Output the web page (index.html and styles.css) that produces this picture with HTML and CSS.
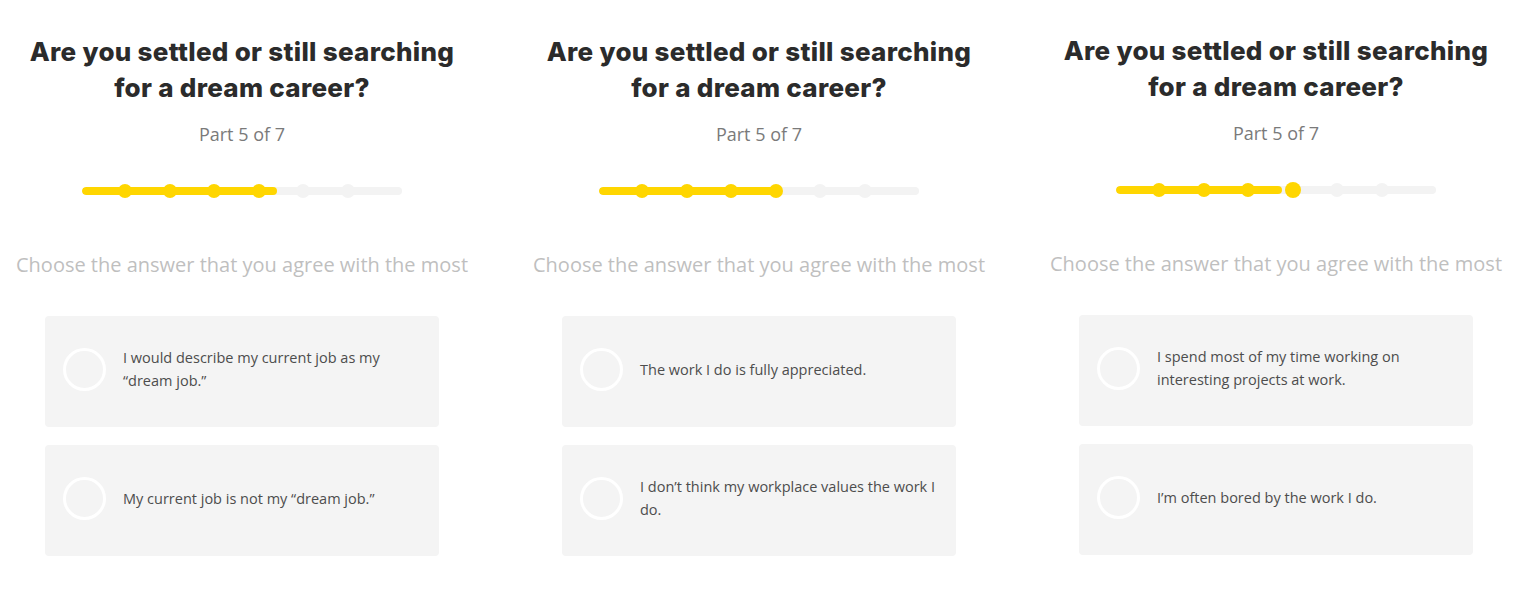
FILE: index.html
```html
<!DOCTYPE html>
<html lang="en">
<head>
<meta charset="utf-8">
<title>Quiz</title>
<link rel="stylesheet" href="styles.css">
</head>
<body>
<main class="row">
  <section class="col">
    <h1 class="title">Are you settled or still searching<br>for a dream career?</h1>
    <p class="part">Part 5 of 7</p>
    <div class="progress">
      <div class="track"><div class="fill" style="width:195px"></div></div>
      <div class="dots">
        <span class="dot on"></span><span class="dot on"></span><span class="dot on"></span><span class="dot on"></span><span class="dot"></span><span class="dot"></span>
      </div>
    </div>
    <p class="hint">Choose the answer that you agree with the most</p>
    <div class="cards">
      <div class="card"><span class="radio"></span><span class="label">I would describe my current job as my “dream job.”</span></div>
      <div class="card"><span class="radio"></span><span class="label">My current job is not my “dream job.”</span></div>
    </div>
  </section>
  <section class="col">
    <h1 class="title">Are you settled or still searching<br>for a dream career?</h1>
    <p class="part">Part 5 of 7</p>
    <div class="progress">
      <div class="track"><div class="fill" style="width:183px"></div></div>
      <div class="dots">
        <span class="dot on"></span><span class="dot on"></span><span class="dot on"></span><span class="dot on"></span><span class="dot"></span><span class="dot"></span>
      </div>
    </div>
    <p class="hint">Choose the answer that you agree with the most</p>
    <div class="cards">
      <div class="card"><span class="radio"></span><span class="label">The work I do is fully appreciated.</span></div>
      <div class="card"><span class="radio"></span><span class="label">I don’t think my workplace values the work I do.</span></div>
    </div>
  </section>
  <section class="col col-up">
    <h1 class="title">Are you settled or still searching<br>for a dream career?</h1>
    <p class="part">Part 5 of 7</p>
    <div class="progress">
      <div class="track"><div class="fill" style="width:166px"></div></div>
      <div class="dots">
        <span class="dot on"></span><span class="dot on"></span><span class="dot on"></span><span class="dot on big"></span><span class="dot"></span><span class="dot"></span>
      </div>
    </div>
    <p class="hint">Choose the answer that you agree with the most</p>
    <div class="cards">
      <div class="card"><span class="radio"></span><span class="label">I spend most of my time working on interesting projects at work.</span></div>
      <div class="card"><span class="radio"></span><span class="label">I’m often bored by the work I do.</span></div>
    </div>
  </section>
</main>
</body>
</html>
```
FILE: styles.css
```css
* { box-sizing: border-box; }
html, body { margin: 0; background: #fff; }
body { font-family: "Open Sans", Lato, sans-serif; }

.row {
  display: flex;
  gap: 35px;
  padding-left: 1px;
}

.col {
  width: 482px;
  flex: none;
  display: flex;
  flex-direction: column;
  align-items: center;
  padding-top: 34px;
}
.col-up { margin-top: -1px; }

.title {
  margin: 0;
  font-family: Inter, sans-serif;
  font-weight: 800;
  font-size: 26px;
  line-height: 36px;
  letter-spacing: 0.3px;
  color: #2b2b2b;
  text-align: center;
}

.part {
  margin: 16px 0 0;
  font-size: 18px;
  line-height: 24px;
  color: #7a7a7a;
}

.progress {
  position: relative;
  width: 320px;
  height: 16px;
  margin-top: 37px;
}
.track {
  position: absolute;
  left: 0; right: 0; top: 4px;
  height: 8px;
  border-radius: 4px;
  background: #f3f3f3;
  overflow: hidden;
}
.fill {
  height: 100%;
  background: #ffd600;
  border-radius: 4px;
}
.dots {
  position: absolute;
  inset: 0;
  display: flex;
  align-items: center;
  gap: 30.6px;
  padding-left: 36px;
}
.dot {
  width: 14px;
  height: 14px;
  border-radius: 50%;
  background: #f3f3f3;
  flex: none;
}
.dot.on { background: #ffd600; }
.dot.big { width: 16px; height: 16px; margin: 0 -1px; }

.hint {
  margin: 52px 0 0;
  font-size: 20px;
  line-height: 28px;
  color: #bfbfbf;
  white-space: nowrap;
}

.cards {
  margin-top: 37px;
  display: flex;
  flex-direction: column;
  gap: 18px;
  width: 394px;
}
.card {
  height: 111px;
  background: #f4f4f4;
  border-radius: 4px;
  display: flex;
  align-items: center;
  padding: 0 16px 5px 18px;
  gap: 17px;
}
.radio {
  flex: none;
  width: 43px;
  height: 43px;
  border-radius: 50%;
  border: 3.5px solid #fff;
}
.label {
  font-size: 14.5px;
  line-height: 23px;
  color: #4d4d4d;
}
```
